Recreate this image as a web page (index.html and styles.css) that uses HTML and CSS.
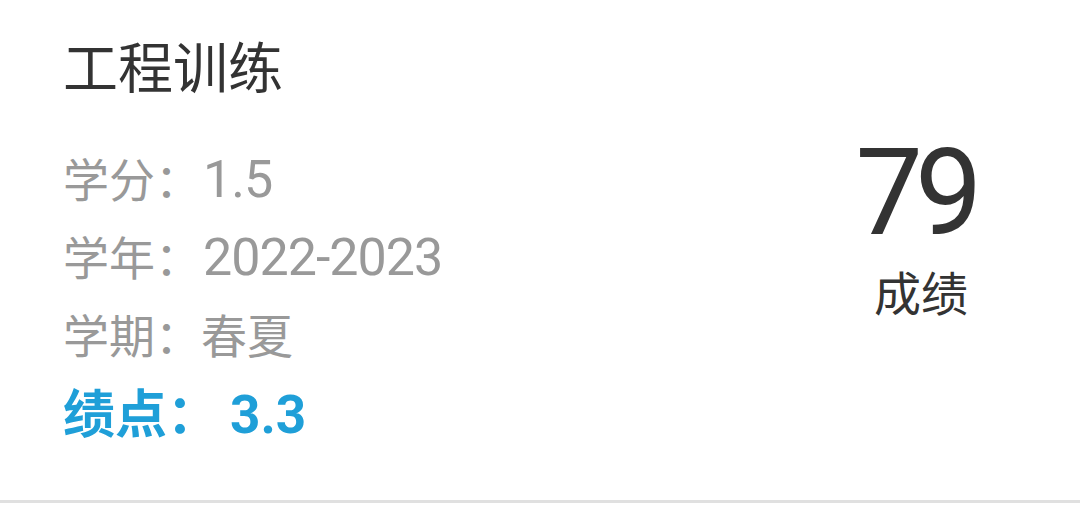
FILE: index.html
```html
<!DOCTYPE html>
<html lang="zh-CN">
<head>
<meta charset="utf-8">
<link rel="stylesheet" href="styles.css">
</head>
<body>
<div class="card">
  <div class="info">
    <div class="title">工程训练</div>
    <div class="row">学分：<span class="val">1.5</span></div>
    <div class="row">学年：<span class="val">2022-2023</span></div>
    <div class="row">学期：春夏</div>
    <div class="row gpa">绩点：<span class="val">3.3</span></div>
  </div>
  <div class="score">
    <div class="num">79</div>
    <div class="label">成绩</div>
  </div>
</div>
</body>
</html>
```
FILE: styles.css
```css
html, body {
  margin: 0;
  padding: 0;
  background: #ffffff;
}
body {
  font-family: "Noto Sans CJK SC", sans-serif;
  width: 1080px;
  height: 523px;
  overflow: hidden;
}
.card {
  display: flex;
  justify-content: space-between;
  height: 503px;
  box-sizing: border-box;
  padding: 27px 59px 0 63px;
  border-bottom: 3px solid #e0e0e0;
}
.info {
  display: flex;
  flex-direction: column;
}
.title {
  font-size: 55px;
  line-height: 74px;
  color: #333333;
  margin-bottom: 37px;
}
.row {
  font-size: 46px;
  line-height: 78px;
  height: 78px;
  color: #999999;
  white-space: nowrap;
}
.val {
  font-family: "Roboto", sans-serif;
  font-size: 52px;
  letter-spacing: -1px;
  margin-left: 2px;
}
.gpa {
  color: #1f9fd8;
  font-weight: bold;
  font-size: 52px;
}
.gpa .val {
  font-size: 53px;
  letter-spacing: 0;
  margin-left: 11px;
}
.score {
  width: 200px;
  display: flex;
  flex-direction: column;
  align-items: center;
  padding-top: 101px;
}
.num {
  font-family: "Roboto", sans-serif;
  font-size: 120px;
  line-height: 130px;
  letter-spacing: -8px;
  margin-right: 12px;
  color: #333333;
}
.label {
  font-size: 47px;
  line-height: 60px;
  color: #333333;
  margin-top: 3px;
}
```
